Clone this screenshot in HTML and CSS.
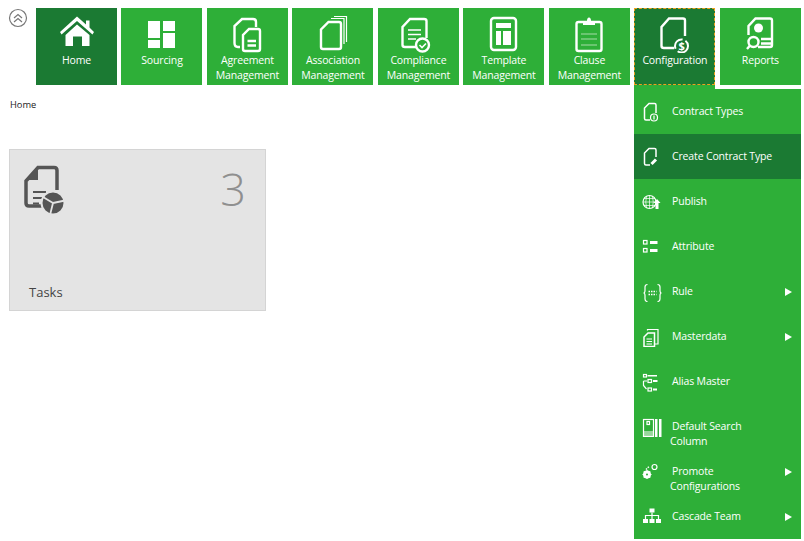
FILE: index.html
```html
<!DOCTYPE html>
<html lang="en">
<head>
    <meta charset="UTF-8">
    <title>Home</title>
    <link rel="stylesheet" href="styles.css">
</head>
<body>
    <header class="topbar">
        <button class="collapse" aria-label="Collapse">
            <svg viewBox="0 0 20 20" width="20" height="20"><circle cx="10" cy="10" r="8.5"/><path d="M6 10l4-3.500 4 3.500M6 14l4-3.500 4 3.500"/></svg>
        </button>
        <nav class="tiles">
            <a class="tile active">
                <svg class="tile-icon" viewBox="0 0 40 38"><path class="fill" d="M20 1.500L29 9.500V5.500h3.500V12.500L37 17 35.500 19.500 20 6 4.500 19.500 3 17zM8.500 20L20 9.500 32.500 20V31H25V21.500H16V31H8.500z"/></svg>
                <span>Home</span>
            </a>
            <a class="tile">
                <svg class="tile-icon" viewBox="0 0 40 38"><path class="fill" d="M6 6h12v17H6zM6 25h12v8H6zM21 6h12v10H21zM21 18h12v15H21z"/></svg>
                <span>Sourcing</span>
            </a>
            <a class="tile">
                <svg class="tile-icon" viewBox="0 0 40 38"><path d="M13 32H11Q7.500 32 7.500 28V11L15 4H26Q29 4 29 7V12"/><path d="M22 14H31Q33 14 33 16V34Q33 36 31 36H18Q16 36 16 34V20zM20.500 26H29M20.500 30.500H29"/></svg>
                <span>Agreement<br>Management</span>
            </a>
            <a class="tile">
                <svg class="tile-icon" viewBox="0 0 40 38"><path d="M15.500 7H26Q28 7 28 9V32Q28 34 26 34H10Q8 34 8 32V14.500z"/><path d="M18 3.500H31V29" class="thin"/><path d="M21 1.500H33.500V27" class="thin"/></svg>
                <span>Association<br>Management</span>
            </a>
            <a class="tile">
                <svg class="tile-icon" viewBox="0 0 40 38"><path d="M19 32H7Q4.500 32 4.500 30V12L12 4H26Q28.500 4 28.500 6V23"/><path d="M10 15H23M10 19.500H23M10 24H18" class="mid"/><circle cx="24.500" cy="30" r="6.500"/><path d="M21.500 30l2.500 2.500 4-4" class="mid"/></svg>
                <span>Compliance<br>Management</span>
            </a>
            <a class="tile">
                <svg class="tile-icon" viewBox="0 0 40 38"><rect x="7" y="3" width="25" height="32" rx="3"/><path class="fill" d="M12 8H27V13H12zM12 16H17V30H12zM19 16H27V30H19z"/></svg>
                <span>Template<br>Management</span>
            </a>
            <a class="tile">
                <svg class="tile-icon" viewBox="0 0 40 38"><rect x="7.500" y="7" width="25" height="29" rx="2"/><path class="fill" d="M14 10V6H18Q18 2.500 20 2.500T22 6H26V10z"/><path d="M12 19H28M12 24H28M12 30H28" class="pale"/></svg>
                <span>Clause<br>Management</span>
            </a>
            <a class="tile open">
                <svg class="tile-icon" viewBox="0 0 40 38"><path d="M19 33H9Q6.500 33 6.500 31V12L14 3.500H28Q30 3.500 30 5.500V21"/><circle cx="26.500" cy="31" r="6.500" class="ring"/><text x="26.500" y="34.500" class="glyph">$</text></svg>
                <span>Configuration</span>
            </a>
            <a class="tile">
                <svg class="tile-icon" viewBox="0 0 40 38"><path d="M8.500 20V11L15.500 3.500H30Q32 3.500 32 5.500V30Q32 32 30 32H18"/><circle class="fill" cx="18.500" cy="13" r="4.500"/><circle cx="13.500" cy="27" r="5"/><path d="M10 30.500L7 34M21 24H31M21 28.500H31"/></svg>
                <span>Reports</span>
            </a>
        </nav>
    </header>

    <ul class="menu">
        <li class="menu-item">
            <svg class="menu-icon" viewBox="0 0 20 20"><path d="M8 18H4Q2.500 18 2.500 16.500V6L7 1.500H12.500Q14 1.500 14 3V11"/><circle cx="12" cy="15.500" r="3.500" class="thin"/><path d="M12 13.500V17.500" class="thin"/></svg>
            <span class="menu-label">Contract Types</span>
        </li>
        <li class="menu-item selected">
            <svg class="menu-icon" viewBox="0 0 20 20"><path d="M8 18H4Q2.500 18 2.500 16.500V6L7 1.500H12.500Q14 1.500 14 3V10"/><path d="M9.500 17L14 12.500" class="heavy"/></svg>
            <span class="menu-label">Create Contract Type</span>
        </li>
        <li class="menu-item">
            <svg class="menu-icon" viewBox="0 0 20 20"><circle cx="7.500" cy="10" r="6.500" class="thin"/><path d="M1 10H14M7.500 3.500V16.500M2 6.500H13M2 13.500H13M4.500 4.500Q3 10 4.500 15.500M10.500 4.500Q12 10 10.500 15.500" class="fine"/><path class="fill" d="M15 7l3.500 4H16.500v6h-3v-6H11.500z"/></svg>
            <span class="menu-label">Publish</span>
        </li>
        <li class="menu-item">
            <svg class="menu-icon" viewBox="0 0 20 20"><rect x="1.500" y="3.500" width="3.500" height="3.500" class="thin"/><rect x="1.500" y="11.500" width="3.500" height="3.500" class="thin"/><path class="fill" d="M8 4h7.500v3H8zM8 12h7.500v3H8z"/></svg>
            <span class="menu-label">Attribute</span>
        </li>
        <li class="menu-item has-sub">
            <svg class="menu-icon" viewBox="0 0 20 20"><path d="M5.500 2.500Q3 2.500 3 5V8.500Q3 11 1.500 11Q3 11 3 13.500V17Q3 19.500 5.500 19.500M15.500 2.500Q18 2.500 18 5V8.500Q18 11 19.500 11Q18 11 18 13.500V17Q18 19.500 15.500 19.500" class="thin"/><path d="M6.500 9.500H14.500M6.500 12.500H14.500" class="dots"/></svg>
            <span class="menu-label">Rule</span>
            <i class="arrow"></i>
        </li>
        <li class="menu-item has-sub">
            <svg class="menu-icon" viewBox="0 0 20 20"><path d="M5.500 3.500V2.500H16V17H13" class="thin"/><path d="M6 6H12.500V19.500H2V10z"/><path d="M4.500 12H10M4.500 14.500H10M4.500 17H10" class="thin"/></svg>
            <span class="menu-label">Masterdata</span>
            <i class="arrow"></i>
        </li>
        <li class="menu-item">
            <svg class="menu-icon" viewBox="0 0 20 20"><rect x="1.500" y="2.500" width="3" height="2.500" class="thin"/><path class="fill" d="M5.500 3h9.500v1.500H5.500zM11 8h4.500v2H11zM11 16.500h4v2h-4z"/><rect x="6" y="7.500" width="3.500" height="3" class="thin"/><rect x="6" y="16" width="3.500" height="3" class="thin"/><path d="M1.500 9V13.500L4.500 17M1.500 9H5" class="thin"/></svg>
            <span class="menu-label">Alias Master</span>
        </li>
        <li class="menu-item">
            <svg class="menu-icon" viewBox="0 0 20 20"><rect x="1.500" y="2.500" width="10" height="17" class="thin"/><path class="fill" d="M13 2h2.500v18h-2.500zM17 2h2.500v18h-2.500z"/><path class="fill" d="M2 14h9v5.500H2z" opacity=".5"/><rect x="5" y="4.500" width="2.500" height="3" class="thin"/></svg>
            <span class="menu-label">Default Search<br>Column</span>
        </li>
        <li class="menu-item has-sub">
            <svg class="menu-icon" viewBox="0 0 20 20"><circle cx="5" cy="12.500" r="2.500" class="heavy"/><path d="M5 8V9.500M5 15.500V17M.5 12.500H2M8 12.500H9.500M1.800 9.300L2.900 10.400M7.100 14.600L8.200 15.700M1.800 15.700L2.900 14.600M7.100 10.400L8.200 9.300" class="thin"/><circle cx="12.500" cy="5" r="2.500" class="thin"/><path d="M4 7.500L7 4.500" class="dots"/></svg>
            <span class="menu-label">Promote<br>Configurations</span>
            <i class="arrow"></i>
        </li>
        <li class="menu-item has-sub">
            <svg class="menu-icon" viewBox="0 0 20 20"><path class="fill" d="M7.500 1.500h5v4h-5zM1 12h5v4H1zM7.500 12h5v4h-5zM14 12h5v4h-5z"/><path d="M10 5.500V12M3.500 12V8.500H16.500V12" class="thin"/></svg>
            <span class="menu-label">Cascade Team</span>
            <i class="arrow"></i>
        </li>
    </ul>

    <main class="content">
        <div class="breadcrumb">Home</div>
        <div class="card">
            <div class="card-top">
                <svg class="card-icon" viewBox="0 0 44 52"><path d="M19 42H5Q2 42 2 39V17L14 3.500H30Q33 3.500 33 6.500V26"/><path class="fill" d="M14 3.500V16H2z"/><path d="M9 28H22M9 34H19M9 39.500H15" class="lines"/><circle class="pie" cx="29" cy="39" r="11.500"/><path class="cuts" d="M29 39L19 33M29 39L41 36.500M29 39L26 51"/></svg>
                <span class="card-count">3</span>
            </div>
            <div class="card-title">Tasks</div>
        </div>
    </main>
</body>
</html>
```

FILE: styles.css
```css
* {
    box-sizing: border-box;
}
body {
    margin: 0;
    font-family: "Open Sans", "Noto Sans", sans-serif;
    font-size: 10.5px;
    letter-spacing: -0.15px;
    background: #fff;
    color: #222;
}
svg path, svg rect, svg circle {
    fill: none;
    stroke: #fff;
    stroke-width: 1.5;
}
.tile-icon path, .tile-icon rect, .tile-icon circle {
    stroke-width: 2.4;
}
svg .fill, .tile-icon .fill {
    fill: #fff;
    stroke: none;
}
svg .fine {
    stroke-width: 0.7;
}
svg .thin, .tile-icon .thin {
    stroke-width: 1.2;
}
.tile-icon .mid {
    stroke-width: 1.6;
}
svg .heavy {
    stroke-width: 3;
}
.tile-icon .pale {
    stroke: #a5dba8;
    stroke-width: 1.2;
}
svg .dots {
    stroke-width: 1.5;
    stroke-dasharray: 1.500 1;
}
.tile-icon .ring {
    stroke-width: 2;
    stroke-dasharray: 14 3;
}
svg .glyph {
    fill: #fff;
    font-size: 11px;
    font-weight: bold;
    text-anchor: middle;
}

.topbar {
    display: flex;
    align-items: flex-start;
    padding: 8px 0 0 8px;
}
.collapse {
    width: 20px;
    height: 20px;
    margin-right: 8px;
    padding: 0;
    border: none;
    background: none;
}
.collapse svg path, .collapse svg circle {
    stroke: #777;
    stroke-width: 1.2;
}
.tiles {
    display: flex;
    gap: 4.49px;
}
.tile {
    display: block;
    width: 81px;
    height: 77px;
    padding-top: 7px;
    background: #2eaf38;
    color: #fff;
    text-align: center;
    line-height: 15px;
}
.tile span {
    display: block;
}
.tile-icon {
    display: block;
    width: 40px;
    height: 38px;
    margin: 0 auto;
}
.tile.active {
    background: #1b7a33;
}
.tile.open {
    position: relative;
    background: #1b7a33;
    outline: 1px dashed #f0a01e;
    outline-offset: -1px;
}
.tile.open::after {
    content: "";
    position: absolute;
    left: 0;
    right: 0;
    top: 77px;
    height: 4px;
    background: #2eaf38;
}

.menu {
    position: absolute;
    top: 89px;
    left: 634px;
    width: 167px;
    margin: 0;
    padding: 0;
    list-style: none;
    background: #2eaf38;
    color: #fff;
    line-height: 15px;
}
.menu-item {
    display: flex;
    align-items: flex-start;
    height: 45px;
    padding: 13px 9px 0 8px;
}
.menu-item.selected {
    background: #1b7a33;
}
.menu-icon {
    flex: none;
    width: 20px;
    height: 20px;
}
.menu-label {
    flex: 1;
    margin: 2px 0 0 8px;
    text-indent: 2px;
}
.arrow {
    flex: none;
    width: 0;
    height: 0;
    margin-top: 6px;
    border-left: 7px solid #fff;
    border-top: 4px solid transparent;
    border-bottom: 4px solid transparent;
}

.content {
    padding: 13px 0 0 10px;
}
.breadcrumb {
    font-size: 9.300px;
    letter-spacing: 0;
    line-height: 14px;
    color: #222;
}
.card {
    display: flex;
    flex-direction: column;
    justify-content: space-between;
    width: 257px;
    height: 162px;
    margin: 37px 0 0 -1px;
    padding: 14px 19px 9px 14px;
    background: #e4e4e4;
    border: 1px solid #d4d4d4;
}
.card-top {
    display: flex;
    justify-content: space-between;
    align-items: flex-start;
}
.card-icon {
    width: 44px;
    height: 52px;
}
.card-icon path {
    stroke: #555;
    stroke-width: 3.5;
}
.card-icon .lines {
    stroke-width: 2.2;
}
.card-icon .fill {
    fill: #555;
    stroke: none;
}
.card-icon .pie {
    fill: #555;
    stroke: #e4e4e4;
    stroke-width: 2;
}
.card-icon .cuts {
    stroke: #e4e4e4;
    stroke-width: 1.8;
}
.card-count {
    font-weight: 300;
    font-size: 45px;
    letter-spacing: 0;
    line-height: 50px;
    color: #8f8f8f;
}
.card-title {
    padding-left: 5px;
    font-size: 13px;
    letter-spacing: 0;
    line-height: 18px;
    color: #444;
}
```
